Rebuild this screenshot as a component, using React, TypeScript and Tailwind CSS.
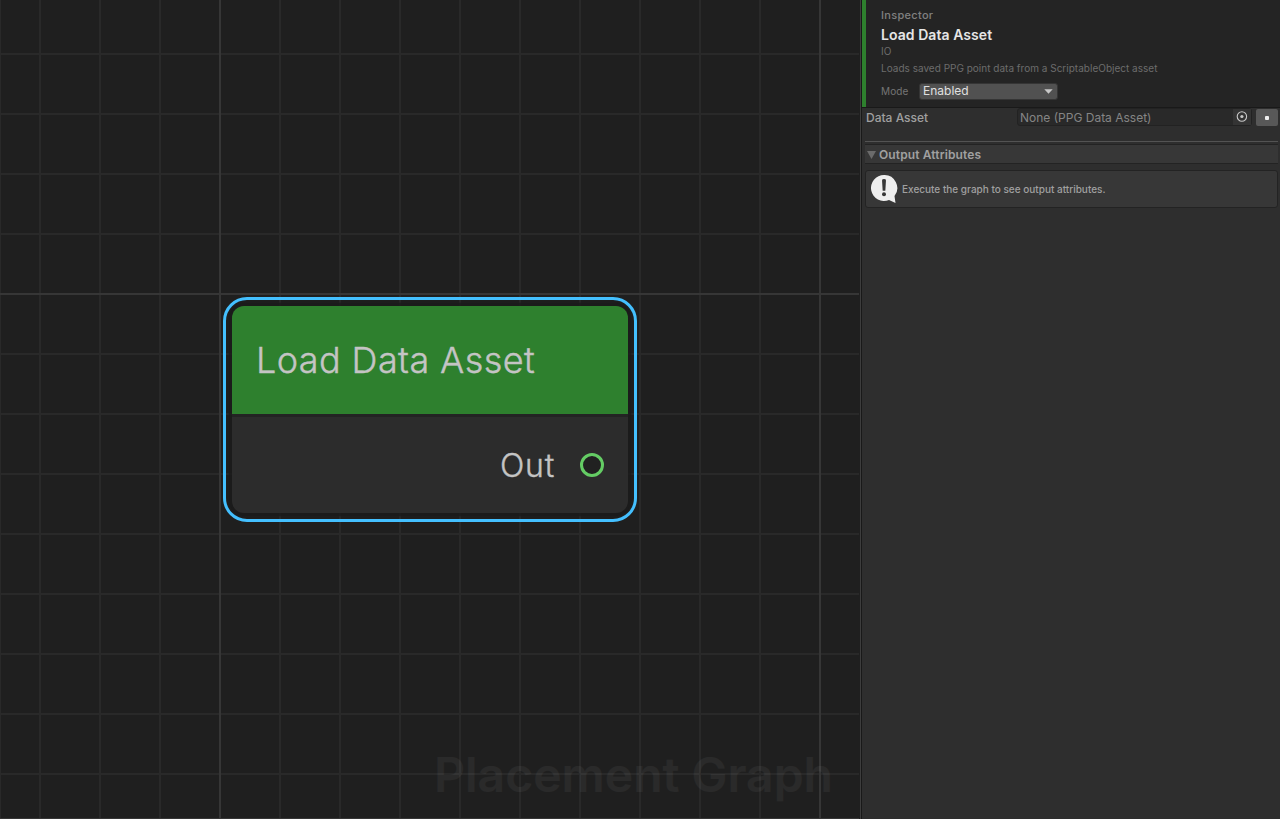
const columns = [39, 99, 159, 279, 339, 399, 459, 519, 579, 639, 699, 759];
const rows = [53, 113, 173, 233, 353, 413, 473, 533, 593, 653, 713, 773];

function GridLines() {
  return (
    <svg className="absolute inset-0" width="860" height="819" shapeRendering="crispEdges">
      <g fill="#292929">
        {columns.map((x) => (
          <rect key={x} x={x} y="0" width="2" height="819" />
        ))}
        {rows.map((y) => (
          <rect key={y} x="0" y={y} width="859" height="2" />
        ))}
        <rect x="0" y="0" width="1" height="819" />
      </g>
      <g fill="#363636">
        <rect x="219" y="0" width="2" height="819" />
        <rect x="819" y="0" width="2" height="819" />
        <rect x="0" y="293" width="859" height="2" />
        <rect x="0" y="818" width="859" height="1" />
      </g>
    </svg>
  );
}

function GraphNode() {
  return (
    <div className="absolute left-[223px] top-[297px] h-[225px] w-[414px] rounded-[24px] border-[3px] border-[#44c0ff] p-[3px]">
      <div className="h-full rounded-[16px] bg-[#1a1a1a]/80 p-[3px] shadow-[0_0_3px_#1a1a1a]">
        <div className="flex h-full flex-col overflow-hidden rounded-[12px]">
          <div className="flex h-[108px] items-center bg-[#2e802e] pl-[24px] text-[36px] font-light tracking-[0.4px] text-[#c4c4c4] [-webkit-text-stroke:0.4px_#c4c4c4]">
            <span className="whitespace-nowrap">Load Data Asset</span>
          </div>
          <div className="h-[3px] bg-[#232323]" />
          <div className="flex flex-1 items-center justify-end bg-[#2d2d2d]/95 pr-[24px]">
            <span className="relative top-px mr-[25px] text-[32px] font-light tracking-[0.8px] text-[#c4c4c4] [-webkit-text-stroke:0.4px_#c4c4c4]">Out</span>
            <span className="size-[24px] rounded-full border-[3px] border-[#64cc64] bg-[#212121]" />
          </div>
        </div>
      </div>
    </div>
  );
}

function Inspector() {
  return (
    <aside className="flex w-[420px] flex-col border-l border-[#3d3d3d] bg-[#2e2e2e]">
      <div className="flex h-full flex-col border-l border-[#191919]">
        <header className="flex h-[108px] flex-col border-b border-[#191919] bg-[#242424]">
          <div className="flex h-[107px] flex-col border-l-4 border-[#2e802e] pl-[15px]">
            <div className="mt-[7px] h-[16px] text-[11px] font-medium leading-[16px] tracking-[0.3px] text-[#808080]">Inspector</div>
            <div className="mt-[2px] h-[20px] text-[14px] font-semibold leading-[20px] tracking-[0.06px] text-[#e6e6e6]">Load Data Asset</div>
            <div className="h-[13px] text-[10px] leading-[13px] text-[#6c6c6c]">IO</div>
            <div className="mt-[3px] h-[15px] whitespace-nowrap text-[10px] leading-[15px] tracking-[0.01px] text-[#6c6c6c]">
              Loads saved PPG point data from a ScriptableObject asset
            </div>
            <div className="mt-[6px] flex h-[18px] items-center">
              <span className="w-[38px] text-[10px] leading-[18px] tracking-[0.1px] text-[#757575]">Mode</span>
              <div className="flex h-[17px] w-[139px] items-center justify-between rounded-[3px] border border-[#353535] bg-[#515151] pl-[3px] pr-[4px] text-[12px] text-[#e0e0e0]">
                <span className="leading-[14px]">Enabled</span>
                <svg width="9" height="5" viewBox="0 0 9 5"><path d="M0.3 0.3H8.7L4.5 4.8Z" fill="#c8c8c8" /></svg>
              </div>
            </div>
          </div>
        </header>

        <div className="flex h-[18px] items-center pl-1 pr-[2px]">
          <span className="w-[151px] pt-[2px] text-[12px] font-medium leading-[18px] text-[#a0a0a0]">Data Asset</span>
          <div className="flex h-[18px] w-[235px] items-center justify-between rounded-[3px] border border-[#222222] bg-[#292929] pl-[2px]">
            <span className="pt-[2px] text-[12px] leading-[16px] text-[#858585]">None (PPG Data Asset)</span>
            <div className="flex h-[16px] w-[18px] items-center justify-center bg-[#343434]">
              <svg width="12" height="12" viewBox="0 0 12 12">
                <circle cx="5.9" cy="5.5" r="4.7" fill="none" stroke="#c8c8c8" strokeWidth="1.1" />
                <circle cx="5.9" cy="5.5" r="1.6" fill="#c8c8c8" />
              </svg>
            </div>
          </div>
          <div className="ml-auto flex h-[17px] w-[22px] items-center justify-center rounded-[2px] bg-[#585858] pt-px">
            <svg width="4" height="4"><rect width="4" height="4" rx="1" fill="#eeeeee" /></svg>
          </div>
        </div>

        <div className="ml-[3px] mr-[2px] mt-[15px] h-px bg-[#535353]" />
        <div className="ml-[3px] mr-[2px] mt-[2px] flex h-[20px] items-center border-y border-[#232323] bg-[#373737] pl-[2px]">
          <svg className="mt-px" width="9" height="8" viewBox="0 0 9 8"><path d="M0 0H9L4.5 8Z" fill="#6b6b6b" /></svg>
          <span className="ml-[3px] pt-[2px] text-[12px] font-semibold leading-[16px] tracking-[0.12px] text-[#a0a0a0]">Output Attributes</span>
        </div>
        <div className="ml-[3px] mr-[2px] mt-[6px] flex h-[38px] items-center rounded-[3px] border border-[#232323] bg-[#373737] pl-[5px]">
          <svg width="27" height="28" viewBox="0 0 27 28">
            <path d="M13 0A13 13 0 1 0 18 25L24.5 28L23.5 21A13 13 0 0 0 13 0Z" fill="#eeeeee" />
            <path d="M11 5.4Q11 4.1 13 4.1Q15 4.1 15 5.4L14.3 15.8H11.7Z" fill="#373737" />
            <circle cx="13" cy="19.3" r="2" fill="#373737" />
          </svg>
          <span className="ml-[4px] whitespace-nowrap text-[10px] font-medium leading-[14px] text-[#a0a0a0]">Execute the graph to see output attributes.</span>
        </div>
      </div>
    </aside>
  );
}

export default function App() {
  return (
    <div className="flex h-[819px] w-[1280px] overflow-hidden bg-[#1f1f1f] font-['Inter','Liberation_Sans',sans-serif]">
      <main className="relative h-full w-[860px] overflow-hidden">
        <GridLines />
        <div className="absolute bottom-[15px] right-[27px] whitespace-nowrap text-[48px] font-semibold leading-[58px] text-white/5">
          Placement Graph
        </div>
        <GraphNode />
      </main>
      <Inspector />
    </div>
  );
}
